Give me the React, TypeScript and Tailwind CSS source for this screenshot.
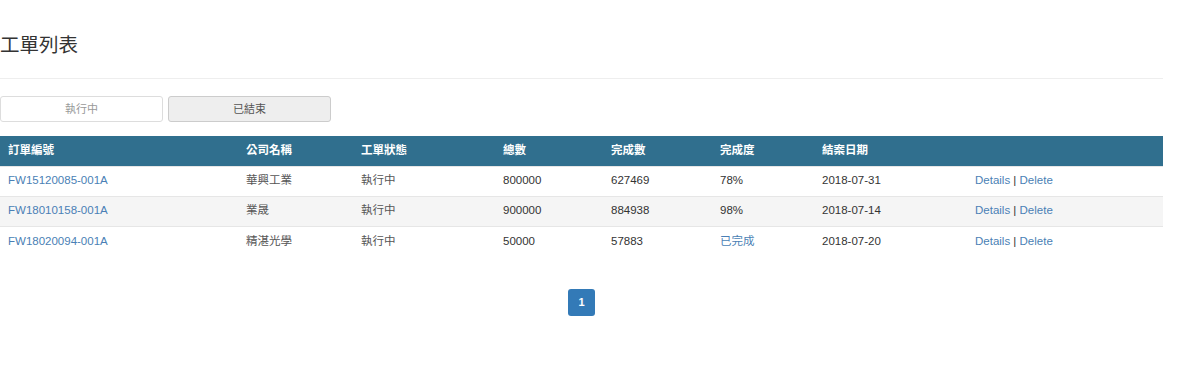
import React from "react";

type Order = {
    id: string;
    company: string;
    status: string;
    total: number;
    done: number;
    progress: string;
    finished: boolean;
    closeDate: string;
};

const orders: Order[] = [
    { id: "FW15120085-001A", company: "華興工業", status: "執行中", total: 800000, done: 627469, progress: "78%", finished: false, closeDate: "2018-07-31" },
    { id: "FW18010158-001A", company: "業晟", status: "執行中", total: 900000, done: 884938, progress: "98%", finished: false, closeDate: "2018-07-14" },
    { id: "FW18020094-001A", company: "精湛光學", status: "執行中", total: 50000, done: 57883, progress: "已完成", finished: true, closeDate: "2018-07-20" },
];

const headers = ["訂單編號", "公司名稱", "工單狀態", "總數", "完成數", "完成度", "結案日期", ""];
const widths = ["238px", "115px", "142px", "108px", "109px", "102px", "153px", "196px"];

export default function App() {
    return (
        <main
            className="w-[1163px] bg-white text-[#333] text-[11.5px]"
            style={{ fontFamily: '"Liberation Sans", Arial, "Noto Sans CJK TC", sans-serif' }}
        >
            <h2 className="pt-[33px] pb-[21px] text-[19.5px] leading-[24px] text-[#333]">工單列表</h2>
            <hr className="border-0 border-t border-[#eee]" />

            {/* tabs */}
            <div className="flex gap-[5px] mt-[17px]">
                <button className="w-[163px] h-[26px] rounded-[3px] border border-[#ddd] bg-white text-[#999] text-[11px]">執行中</button>
                <button className="w-[163px] h-[26px] rounded-[3px] border border-[#ccc] bg-[#eee] text-[#555] text-[11px]">已結束</button>
            </div>

            <table className="mt-[14px] w-full table-fixed border-collapse">
                <colgroup>
                    {widths.map((w, i) => <col key={i} style={{ width: w }} />)}
                </colgroup>
                <thead>
                    <tr className="bg-[#306f8e] text-white h-[30px]">
                        {headers.map((h, i) => (
                            <th key={i} className="text-left font-bold px-2">{h}</th>
                        ))}
                    </tr>
                </thead>
                <tbody>
                    {orders.map((o, i) => (
                        <tr key={o.id} className={`h-[30px] border-t border-[#e6e6e6] ${i % 2 == 1 ? "bg-[#f5f5f5]" : "bg-white"}`}>
                            <td className="px-2 text-[#4a7fb5]">{o.id}</td>
                            <td className="px-2 text-[#555]">{o.company}</td>
                            <td className="px-2 text-[#555]">{o.status}</td>
                            <td className="px-2">{o.total}</td>
                            <td className="px-2">{o.done}</td>
                            <td className={`px-2 ${o.finished ? "text-[#4a7fb5]" : ""}`}>{o.progress}</td>
                            <td className="px-2">{o.closeDate}</td>
                            <td className="px-2">
                                <a className="text-[#4a7fb5]">Details</a> | <a className="text-[#4a7fb5]">Delete</a>
                            </td>
                        </tr>
                    ))}
                </tbody>
            </table>

            {/* pagination */}
            <div className="flex justify-center mt-[33px]">
                <span className="w-[27px] h-[27px] flex items-center justify-center rounded-[3px] bg-[#337ab7] text-white text-[11px] font-bold">1</span>
            </div>
        </main>
    );
}
